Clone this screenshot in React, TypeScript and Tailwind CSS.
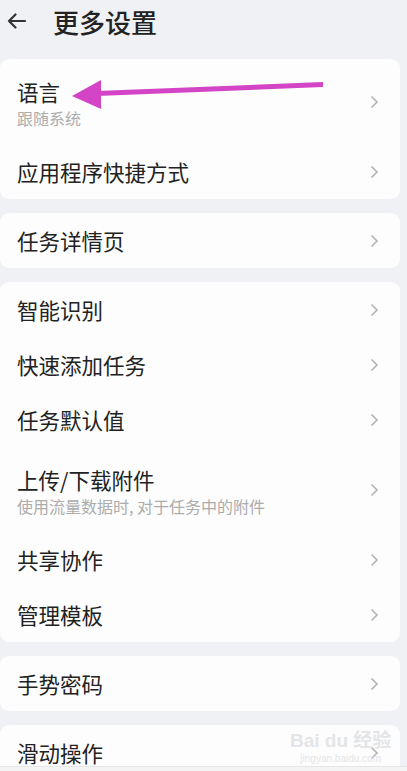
type Row = { title: string; sub?: string };

const groups: Row[][] = [
  [{ title: "语言", sub: "跟随系统" }, { title: "应用程序快捷方式" }],
  [{ title: "任务详情页" }],
  [
    { title: "智能识别" },
    { title: "快速添加任务" },
    { title: "任务默认值" },
    { title: "上传/下载附件", sub: "使用流量数据时, 对于任务中的附件" },
    { title: "共享协作" },
    { title: "管理模板" },
  ],
  [{ title: "手势密码" }],
  [{ title: "滑动操作" }],
];

function Chevron() {
  return (
    <svg width="9" height="14" viewBox="0 0 9 14" className="shrink-0">
      <polyline points="1.5,1.5 7,7 1.5,12.5" fill="none" stroke="#b3b3b3" strokeWidth="1.6" />
    </svg>
  );
}

function SettingRow({ row }: { row: Row }) {
  if (row.sub) {
    return (
      <div className="flex h-[85px] items-center justify-between pl-[17px] pr-[21px]">
        <div className="flex h-full flex-col pt-[20px]">
          <span className="text-[21.5px] leading-[26px] text-[#222]">{row.title}</span>
          <span className="mt-[3px] whitespace-nowrap text-[16px] leading-[20px] text-[#acacac]">{row.sub}</span>
        </div>
        <Chevron />
      </div>
    );
  }
  return (
    <div className="flex h-[55px] items-center justify-between pl-[17px] pr-[21px]">
      <span className="text-[21.5px] leading-[26px] text-[#222]">{row.title}</span>
      <Chevron />
    </div>
  );
}

export default function App() {
  return (
    <div
      className="relative h-[771px] w-[407px] overflow-hidden bg-[#eff1f4]"
      style={{ fontFamily: '"Noto Sans CJK SC", "Noto Sans", sans-serif' }}
    >
      <header className="flex h-[59px] items-start">
        <svg width="20" height="16" viewBox="0 0 20 16" className="ml-[7px] mt-[13px]">
          <path d="M18 8H2M8.5 1.5L2 8l6.5 6.5" fill="none" stroke="#333" strokeWidth="2.2" strokeLinecap="round" strokeLinejoin="round" />
        </svg>
        <h1 className="ml-[26px] mt-[4px] text-[26px] font-medium leading-[36px] text-[#222]">更多设置</h1>
      </header>

      <div className="flex flex-col gap-[14px]">
        {groups.map((g, i) => (
          <section key={i} className="w-[400px] rounded-[9px] bg-[#fdfdfd]">
            {g.map((row) => (
              <SettingRow key={row.title} row={row} />
            ))}
          </section>
        ))}
      </div>

      {/* annotation arrow */}
      <svg className="absolute left-0 top-0" width="407" height="130" viewBox="0 0 407 130">
        <polygon points="97,91 323,82 323,87 97,96" fill="#d444c6" />
        <polygon points="72,96 101,80 101,109" fill="#d444c6" />
      </svg>

      {/* watermark */}
      <div className="absolute left-[290px] top-[730px] flex flex-col items-center whitespace-nowrap text-[#e3e5e8]">
        <span className="text-[19px] font-bold leading-[22px]" style={{ fontFamily: '"Liberation Sans", "Noto Sans CJK SC", sans-serif' }}>
          Bai du 经验
        </span>
        <span className="text-[10px] leading-[14px]" style={{ fontFamily: '"Liberation Sans", sans-serif' }}>
          jingyan.baidu.com
        </span>
      </div>

      <div className="absolute bottom-0 left-0 h-[5px] w-full border-t border-[#e6e6e6] bg-[#f4f4f4]" />
    </div>
  );
}
